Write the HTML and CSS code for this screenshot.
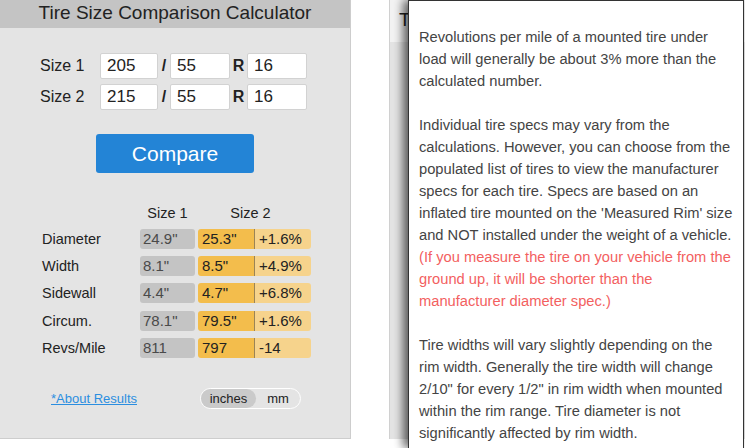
FILE: index.html
```html
<!DOCTYPE html>
<html lang="en">
<head>
    <meta charset="UTF-8">
    <meta name="viewport" content="width=device-width, initial-scale=1.0">
    <title>Tire Size Comparison Calculator</title>
    <link rel="stylesheet" href="styles.css">
</head>
<body>
    <div class="page">
        <section class="calc">
            <h1 class="calc-title">Tire Size Comparison Calculator</h1>
            <div class="sizes">
                <div class="size-row">
                    <label class="size-label">Size 1</label>
                    <input class="tire-input tread" type="text" value="205">
                    <span class="sep slash">/</span>
                    <input class="tire-input ratio" type="text" value="55">
                    <span class="sep rim">R</span>
                    <input class="tire-input wheel" type="text" value="16">
                </div>
                <div class="size-row">
                    <label class="size-label">Size 2</label>
                    <input class="tire-input tread" type="text" value="215">
                    <span class="sep slash">/</span>
                    <input class="tire-input ratio" type="text" value="55">
                    <span class="sep rim">R</span>
                    <input class="tire-input wheel" type="text" value="16">
                </div>
            </div>
            <button class="compare">Compare</button>
            <div class="results">
                <div></div>
                <div class="col-head">Size 1</div>
                <div class="col-head head-two">Size 2</div>

                <div class="row-label">Diameter</div>
                <div class="cell one">24.9"</div>
                <div class="pair"><span class="cell two">25.3"</span><span class="cell diff">+1.6%</span></div>

                <div class="row-label">Width</div>
                <div class="cell one">8.1"</div>
                <div class="pair"><span class="cell two">8.5"</span><span class="cell diff">+4.9%</span></div>

                <div class="row-label">Sidewall</div>
                <div class="cell one">4.4"</div>
                <div class="pair"><span class="cell two">4.7"</span><span class="cell diff">+6.8%</span></div>

                <div class="row-label">Circum.</div>
                <div class="cell one">78.1"</div>
                <div class="pair"><span class="cell two">79.5"</span><span class="cell diff">+1.6%</span></div>

                <div class="row-label">Revs/Mile</div>
                <div class="cell one">811</div>
                <div class="pair"><span class="cell two">797</span><span class="cell diff">-14</span></div>
            </div>
            <div class="calc-foot">
                <a href="#" class="about-link">*About Results</a>
                <div class="units">
                    <span class="unit active">inches</span>
                    <span class="unit">mm</span>
                </div>
            </div>
        </section>
        <section class="calc-second">
            <div class="second-title">Tire Size Comparison Calculator</div>
        </section>
    </div>

    <div class="about-popup">
        <p>Revolutions per mile of a mounted tire under load will generally be about 3% more than the calculated number.</p>
        <p>Individual tire specs may vary from the calculations. However, you can choose from the populated list of tires to view the manufacturer specs for each tire. Specs are based on an inflated tire mounted on the 'Measured Rim' size and NOT installed under the weight of a vehicle. <span class="warn">(If you measure the tire on your vehicle from the ground up, it will be shorter than the manufacturer diameter spec.)</span></p>
        <p>Tire widths will vary slightly depending on the rim width. Generally the tire width will change 2/10" for every 1/2" in rim width when mounted within the rim range. Tire diameter is not significantly affected by rim width.</p>
    </div>
</body>
</html>
```

FILE: styles.css
```css
* {
    box-sizing: border-box;
}

body {
    margin: 0;
    font-family: "Liberation Sans", Arial, sans-serif;
    color: #222;
    background: #fff;
    overflow: hidden;
    height: 448px;
}

.page {
    display: flex;
    align-items: flex-start;
}

.calc {
    width: 351px;
    height: 439px;
    background-color: #e4e4e4;
    border-right: 1px solid #cdcdcd;
    border-bottom: 1px solid #cdcdcd;
}

.calc-title {
    margin: 0;
    height: 28px;
    line-height: 26px;
    background-color: #c4c4c4;
    font-size: 19px;
    font-weight: normal;
    text-align: center;
    color: #222;
}

.sizes {
    padding: 25px 0 0 40px;
    display: flex;
    flex-direction: column;
    gap: 5px;
}

.size-row {
    display: flex;
    align-items: center;
    height: 26px;
}

.size-label {
    width: 60px;
    font-size: 16px;
}

.tire-input {
    height: 26px;
    padding: 0 6px;
    border: 1px solid #d2d2d2;
    border-radius: 2px;
    background: #fff;
    font-family: "Liberation Sans", Arial, sans-serif;
    font-size: 17px;
    color: #222;
}

.tread {
    width: 58px;
}

.ratio, .wheel {
    width: 60px;
}

.sep {
    font-size: 16px;
    font-weight: bold;
    text-align: center;
}

.slash {
    width: 12px;
}

.rim {
    width: 17px;
}

.compare {
    display: block;
    width: 158px;
    height: 39px;
    margin: 24px auto 0;
    border: none;
    border-radius: 3px;
    background-color: #2384d6;
    color: #fff;
    font-family: "Liberation Sans", Arial, sans-serif;
    font-size: 21px;
}

.results {
    display: grid;
    grid-template-columns: 95px 55px 113px;
    column-gap: 3px;
    row-gap: 7.25px;
    margin-top: 31.5px;
    padding-left: 42px;
    font-size: 14.5px;
}

.col-head {
    text-align: center;
    line-height: 17px;
}

.head-two {
    padding-right: 8px;
}

.row-label {
    line-height: 20px;
    color: #222;
}

.cell {
    display: block;
    height: 20px;
    line-height: 20px;
    padding-left: 4px;
    font-size: 15px;
}

.one {
    background-color: #c4c4c4;
    color: #4a4a4a;
    border-radius: 3px;
    padding-left: 3px;
}

.pair {
    display: flex;
}

.two {
    width: 57px;
    background-color: #f3bd4c;
    border-right: 1px solid #9b8456;
    border-radius: 3px 0 0 3px;
}

.diff {
    width: 56px;
    background-color: #f6d38c;
    border-radius: 0 3px 3px 0;
}

.calc-foot {
    display: flex;
    align-items: center;
    justify-content: space-between;
    margin-top: 30px;
    padding: 0 49px 0 51px;
}

.about-link {
    font-size: 13px;
    color: #2b8ee0;
}

.units {
    display: flex;
    width: 101px;
    height: 21px;
    border: 1px solid #fff;
    border-radius: 11px;
    font-size: 13px;
    color: #222;
}

.unit {
    display: flex;
    align-items: center;
    justify-content: center;
    width: 44px;
}

.unit.active {
    width: 55px;
    background-color: #cacaca;
    border-radius: 10px;
}

.calc-second {
    flex: 1;
    margin-left: 38px;
    height: 439px;
    background-color: #e4e4e4;
    border-left: 1px solid #d0d0d0;
}

.second-title {
    height: 42px;
    padding: 9px 0 0 9px;
    background-color: #f3f3f3;
    font-size: 19px;
    white-space: nowrap;
    overflow: hidden;
}

.about-popup {
    position: absolute;
    top: 0;
    left: 408px;
    width: 336px;
    height: 448px;
    overflow: hidden;
    padding: 25px 8px 0 10px;
    background: #fff;
    border: 1px solid #333;
    border-bottom: none;
    box-shadow: -5px 0 9px rgba(0, 0, 0, 0.6);
    font-size: 14.7px;
    line-height: 22px;
    color: #444;
}

.about-popup p {
    margin: 0 0 22px;
}

.warn {
    color: #f35f5f;
}
```
